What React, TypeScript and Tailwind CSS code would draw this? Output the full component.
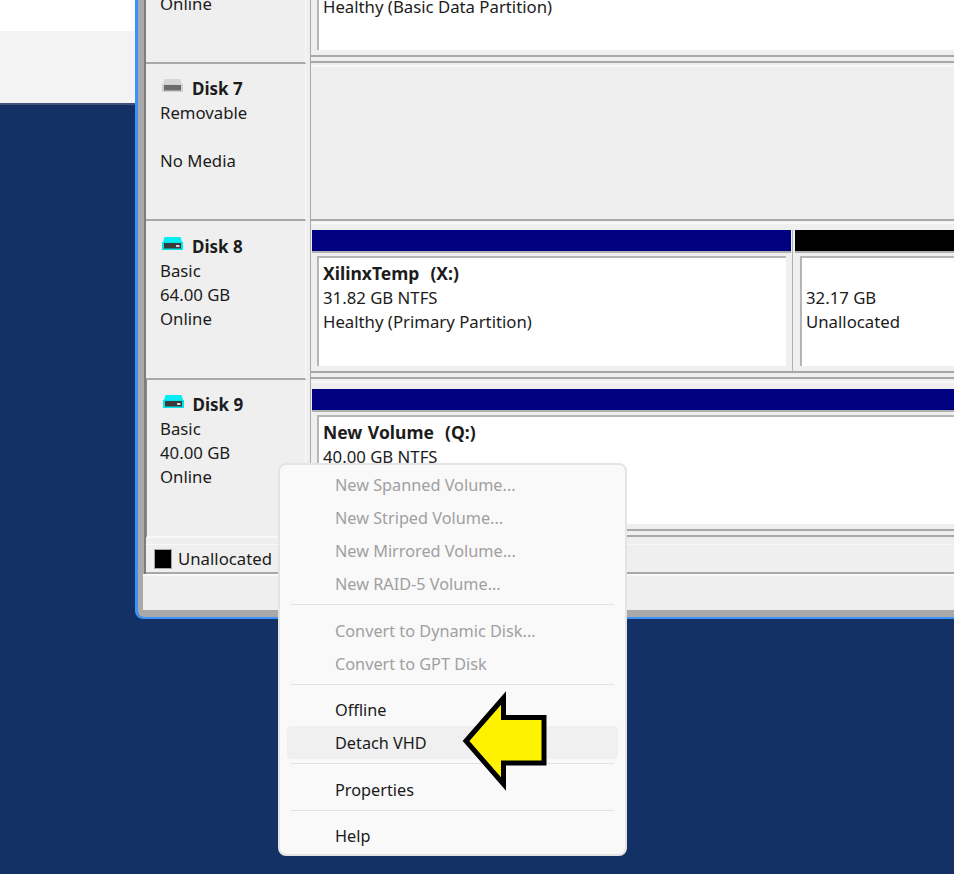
const font = "font-['Noto_Sans',sans-serif] text-[16.75px] leading-[24px] text-[#1c1c1c]"

const DiskIcon = ({ removable }: { removable?: boolean }) => (
    <svg width="21" height="13" viewBox="0 0 21 13" className="block">
        <path d="M2.5 0 H18.5 L20 5 H1 Z" fill={removable ? "#d6d6d6" : "#00eef4"} />
        <rect x="0" y="5" width="21" height="8" fill={removable ? "#cfcfcf" : "#00e4ea"} />
        <rect x="2" y="6" width="17" height="5.5" fill={removable ? "#6c6c6c" : "#3a3a3a"} />
        {!removable && <rect x="14" y="8" width="3.5" height="2" fill="#d8d8d8" />}
    </svg>
)

const DiskLabel = ({ name, lines, removable, selected, pad }: { name: string; lines: string[]; removable?: boolean; selected?: boolean; pad: string }) => (
    <div className={"w-[160px] shrink-0 bg-[#efefef] border-r-[1px] border-r-[#f8f8f8] border-b-[2px] " + pad + " " + (selected ? "border-b-[#f8f8f8] border-l-[1px] border-l-[#8a8a8a] pl-[13px]" : "border-b-[#a8a8a8] pl-[14px]")}>
        <div className="flex items-center h-[24px]">
            <div className={"w-[30px] -mt-[8px] " + (selected ? "ml-[2.5px]" : "ml-[2px]")}><DiskIcon removable={removable} /></div>
            <span className="font-bold text-[17px]">{name}</span>
        </div>
        {lines.map((line, i) => (
            <div key={i} className="h-[24px]">{line}</div>
        ))}
    </div>
)

const Partition = ({ bar, title, lines, className }: { bar: string; title?: string; lines: string[]; className: string }) => (
    <div className={"flex flex-col " + className}>
        <div className={"h-[23px] border-b-[2px] border-b-[#b0b0b0] " + bar} />
        <div className="flex-1 pl-[5px] pr-[5px] pt-[3px] pb-[5px] flex">
            <div className="flex-1 bg-white border-l-[2px] border-t-[2px] border-[#b5b5b5] pl-[4px] pt-[4px] whitespace-pre">
                <div className="h-[24px] -mt-[1px] mb-[1px] font-bold text-[17.5px] [word-spacing:1px]">{title ?? ""}</div>
                {lines.map((line, i) => (
                    <div key={i} className="h-[24px]">{line}</div>
                ))}
            </div>
        </div>
    </div>
)

const DiskArea = ({ children, empty }: { children?: React.ReactNode; empty?: boolean }) => (
    <div className="flex-1 min-w-0 ml-[4px] border-l-[1px] border-l-[#a8a8a8] flex flex-col">
        <div className="flex-1 min-h-0 mt-[1px] border-t-[2px] border-t-[#f8f8f8] pl-[1px] pt-[6px] flex">{children}</div>
        {empty
            ? <div className="h-[2px] mb-0 bg-[#a8a8a8]" />
            : <div className="h-[8px] mb-[1px] border-t-[2px] border-b-[2px] border-[#a8a8a8]" />}
    </div>
)

const MenuItem = ({ label, disabled, hover }: { label: string; disabled?: boolean; hover?: boolean }) => (
    <div className={"h-[33px] mx-[7px] pl-[48px] flex items-center rounded-[4px] " + (disabled ? "text-[#a0a0a0] " : "text-[#1a1a1a] ") + (hover ? "bg-[#f0f0f0]" : "")}>
        {label}
    </div>
)

const MenuLine = ({ my }: { my: string }) => <div className={"h-[1px] mx-[11px] bg-[#e2e2e2] " + my} />

export default function App() {
    return (
        <div className={"relative w-[954px] h-[874px] overflow-hidden bg-[#133164] flex items-start " + font}>
            <div className="w-[135px] shrink-0">
                <div className="h-[31px] bg-white" />
                <div className="h-[72px] bg-[#f3f3f3]" />
                <div className="h-[2px] bg-[#3f5378]" />
            </div>
            <div className="w-[840px] shrink-0 border-l-[3px] border-b-[2px] border-[#3b93f7] rounded-bl-[8px] overflow-hidden">
                <div className="bg-[#a9a9a9] pl-[6px] pb-[7px]">
                    <div className="border-l-[2px] border-l-[#7d7d7d]">
                        <div className="flex h-[64px] overflow-hidden bg-[#efefef]">
                            <div className="w-[160px] shrink-0 border-b-[2px] border-b-[#a8a8a8] border-r-[1px] border-r-[#f8f8f8] pl-[14px]">
                                <div className="-mt-[8px]">Online</div>
                            </div>
                            <div className="flex-1 min-w-0 ml-[4px] border-l-[1px] border-l-[#a8a8a8] flex flex-col">
                                <div className="h-[50px] flex pl-[6px]">
                                    <div className="flex-1 bg-white border-l-[2px] border-[#b5b5b5] pl-[4px]">
                                        <div className="-mt-[5px]">Healthy (Basic Data Partition)</div>
                                    </div>
                                </div>
                                <div className="h-[8px] mt-[5px] border-t-[2px] border-b-[2px] border-[#a8a8a8]" />
                            </div>
                        </div>
                        <div className="flex h-[157px] bg-[#efefef]">
                            <DiskLabel name="Disk 7" lines={["Removable", "", "No Media"]} removable pad="pt-[13px]" />
                            <DiskArea empty />
                        </div>
                        <div className="flex h-[159px] bg-[#efefef]">
                            <DiskLabel name="Disk 8" lines={["Basic", "64.00 GB", "Online"]} pad="pt-[14px]" />
                            <DiskArea>
                                <Partition bar="bg-[#000080]" title="XilinxTemp  (X:)" lines={["31.82 GB NTFS", "Healthy (Primary Partition)"]} className="w-[479px] shrink-0" />
                                <div className="w-[1px] ml-[1px] mr-[2px] bg-[#b0b0b0]" />
                                <Partition bar="bg-black" lines={["32.17 GB", "Unallocated"]} className="flex-1 min-w-0" />
                            </DiskArea>
                        </div>
                        <div className="flex h-[158px] bg-[#efefef]">
                            <DiskLabel name="Disk 9" lines={["Basic", "40.00 GB", "Online"]} selected pad="pt-[13px]" />
                            <DiskArea>
                                <Partition bar="bg-[#000080]" title="New Volume  (Q:)" lines={["40.00 GB NTFS", "Healthy (Primary Partition)"]} className="flex-1 min-w-0" />
                            </DiskArea>
                        </div>
                        <div className="h-[7px] bg-[#efefef] border-b-[1px] border-b-[#f8f8f8]" />
                        <div className="h-[27px] bg-[#efefef] flex items-center pl-[8px]">
                            <div className="w-[18px] h-[20px] bg-black border border-[#a8a8a8]" />
                            <span className="ml-[6px]">Unallocated</span>
                        </div>
                        <div className="h-[2px] bg-[#a8a8a8]" />
                    </div>
                    <div className="h-[36px] -ml-[1px] bg-[#efefef] border-t-[2px] border-t-[#f8f8f8]" />
                </div>
            </div>
            <div className="absolute left-[278px] top-[463px] w-[349px] h-[393px] bg-[#f9f9f9] border-[2px] border-[#e4e4e4] rounded-[8px] pt-[3px] text-[16.25px]">
                <MenuItem label="New Spanned Volume..." disabled />
                <MenuItem label="New Striped Volume..." disabled />
                <MenuItem label="New Mirrored Volume..." disabled />
                <MenuItem label="New RAID-5 Volume..." disabled />
                <MenuLine my="mt-[4px] mb-[9px]" />
                <MenuItem label="Convert to Dynamic Disk..." disabled />
                <MenuItem label="Convert to GPT Disk" disabled />
                <MenuLine my="mt-[4px] mb-[8px]" />
                <MenuItem label="Offline" />
                <MenuItem label="Detach VHD" hover />
                <MenuLine my="mt-[4px] mb-[9px]" />
                <MenuItem label="Properties" />
                <MenuLine my="mt-[4px] mb-[8px]" />
                <MenuItem label="Help" />
            </div>
            <svg className="absolute left-[455px] top-[685px]" width="100" height="110" viewBox="455 685 100 110">
                <polygon points="466,741 503.5,698 503.5,717.5 544,717.5 544,763 503.5,763 503.5,784" fill="#fff200" stroke="#000" strokeWidth="5" strokeLinejoin="miter" />
            </svg>
        </div>
    )
}
